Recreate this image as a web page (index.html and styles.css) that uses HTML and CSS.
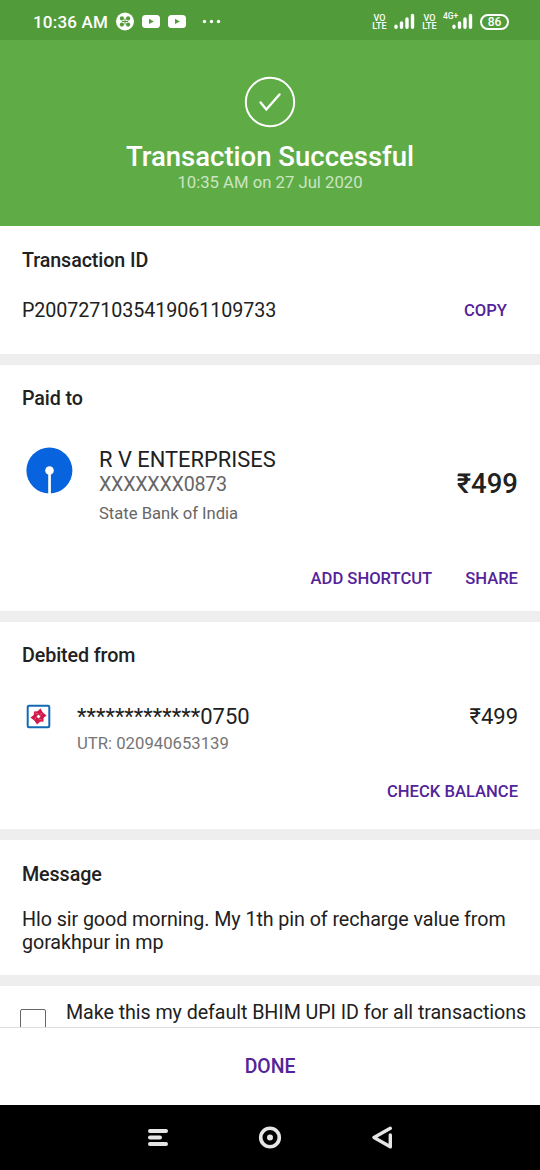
FILE: index.html
```html
<!DOCTYPE html>
<html lang="en">
<head>
<meta charset="utf-8">
<title>Transaction Successful</title>
<link rel="stylesheet" href="styles.css">
</head>
<body>
<div class="screen">
  <div class="status">
    <span class="clock">10:36 AM</span>
    <svg class="status-apps" width="108" height="20" viewBox="0 0 108 20">
      <circle cx="10" cy="9.500" r="9" fill="#fff"/>
      <g fill="#529b3a"><circle cx="6.900" cy="6.400" r="2.100"/><circle cx="13.100" cy="6.400" r="2.100"/><circle cx="6.900" cy="12.600" r="2.100"/><circle cx="13.100" cy="12.600" r="2.100"/></g><path d="M7 9.500h6M10 6.500v6" stroke="#529b3a" stroke-width="1"/>
      <rect x="27" y="3" width="18" height="13" rx="3.500" fill="#fff"/><path d="M34 6.800v5.200l4.800-2.600z" fill="#529b3a"/>
      <rect x="53" y="3" width="18" height="13" rx="3.500" fill="#fff"/><path d="M60 6.800v5.200l4.800-2.600z" fill="#529b3a"/>
      <g fill="#fff"><circle cx="89.500" cy="9.500" r="1.700"/><circle cx="96.500" cy="9.500" r="1.700"/><circle cx="103.500" cy="9.500" r="1.700"/></g>
    </svg>
    <span class="volte volte-first">VO<br>LTE</span>
    <svg class="signal" width="21" height="17" viewBox="0 0 21 17" stroke="#fff" stroke-width="3.400" stroke-linecap="round"><path d="M2 14.300v-1M7.500 14.300V10M13 14.300V6M18.500 14.300V2.500"/></svg>
    <span class="volte">VO<br>LTE</span>
    <span class="data-signal">
      <span class="net">4G+</span>
      <svg class="signal" width="21" height="17" viewBox="0 0 21 17" stroke="#fff" stroke-width="3.400" stroke-linecap="round"><path d="M2 14.300v-1M7.500 14.300V10M13 14.300V6M18.500 14.300V2.500"/></svg>
    </span>
    <span class="battery">86</span>
  </div>

  <header class="hero">
    <svg width="52" height="52" viewBox="0 0 52 52" fill="none" stroke="#fff"><circle cx="26" cy="26" r="24.200" stroke-width="2"/><path d="M16.600 26.500l5.700 7L35.500 18.500" stroke-width="2.400" stroke-linecap="round"/></svg>
    <h1 class="hero-title">Transaction Successful</h1>
    <p class="hero-date">10:35 AM on 27 Jul 2020</p>
  </header>

  <main class="content">
    <section class="card card-id">
      <h2 class="heading">Transaction ID</h2>
      <div class="row id-row"><span class="txn">P2007271035419061109733</span><a class="action copy">COPY</a></div>
    </section>

    <section class="card card-paid">
      <h2 class="heading">Paid to</h2>
      <div class="row payee">
        <svg class="sbi" width="48" height="48" viewBox="0 0 48 48"><circle cx="24.400" cy="23.500" r="23" fill="#0864de"/><circle cx="24.500" cy="23.500" r="4.300" fill="#fff"/><path d="M23.200 26h2.700v22h-2.700z" fill="#fff"/></svg>
        <div class="payee-info"><div class="payee-name">R V ENTERPRISES</div><div class="payee-account">XXXXXXX0873</div><div class="payee-bank">State Bank of India</div></div>
        <div class="amount-large">₹499</div>
      </div>
      <div class="actions"><a class="action shortcut">ADD SHORTCUT</a><a class="action share">SHARE</a></div>
    </section>

    <section class="card card-debit">
      <h2 class="heading">Debited from</h2>
      <div class="row debit">
        <svg class="bank" width="25" height="25" viewBox="0 0 25 25"><rect x="1.700" y="1.700" width="21.600" height="21.600" rx="1.200" fill="#fff" stroke="#136ab4" stroke-width="2"/><path fill="#d0184a" fill-rule="evenodd" d="M8 7.500L11.500 7.200L14.500 4.500L16.800 8.500L20.500 11.500L17.500 14L17.500 17.500L14 17.800L11 20.500L8.500 16.800L4.500 13.500L7.800 11ZM12.500 10.500L10.500 12.500L12.500 14.500L14.500 12.500Z"/><path d="M9 9l2.600.8M15.500 9l-.8 2.500M9 15.500l1-2M15.800 16l-2.600-.8" stroke="#f4a0b7" stroke-width=".5"/></svg>
        <div class="debit-info"><div class="debit-account">*************0750</div><div class="utr">UTR: 020940653139</div></div>
        <div class="amount">₹499</div>
      </div>
      <div class="actions"><a class="action balance">CHECK BALANCE</a></div>
    </section>

    <section class="card card-message">
      <h2 class="heading">Message</h2>
      <p class="message">Hlo sir good morning. My 1th pin of recharge value from gorakhpur in mp</p>
    </section>

    <section class="card card-default"><span class="checkbox"></span><span class="default-label">Make this my default BHIM UPI ID for all transactions</span></section>
  </main>

  <footer class="footer"><a class="done">DONE</a></footer>
  <nav class="navbar">
    <svg width="24" height="24" viewBox="0 0 24 24" stroke="#e6e6e6" stroke-width="4" stroke-linecap="round"><path d="M4 5h16M4 11.500h10M4 18h16"/></svg>
    <svg width="24" height="24" viewBox="0 0 24 24"><circle cx="12" cy="11.500" r="9.300" fill="none" stroke="#e6e6e6" stroke-width="3.600"/><circle cx="12" cy="11.500" r="3" fill="#e6e6e6"/></svg>
    <svg width="24" height="24" viewBox="0 0 24 24" fill="none" stroke="#e6e6e6" stroke-width="3.400" stroke-linecap="round" stroke-linejoin="round"><path d="M20.300 2.300L4 11.500L20.300 20.800V9"/></svg>
  </nav>
</div>
</body>
</html>
```

FILE: styles.css
```css
* { box-sizing: border-box; }
body { margin: 0; font-family: Roboto, sans-serif; color: #212121; background: #fff; }
h1, h2, p { margin: 0; }
.screen { width: 540px; height: 1170px; display: flex; flex-direction: column; overflow: hidden; white-space: nowrap; }
.status { height: 40px; flex: none; display: flex; align-items: center; background: #529b3a; color: #fff; padding: 3px 31px 0 33px; }
.clock { font-size: 17px; font-weight: 500; letter-spacing: .2px; width: 82px; }
.status-apps { flex: none; }
.volte { font-size: 9px; line-height: 8px; font-weight: 500; text-align: center; width: 15px; }
.volte-first { margin-left: auto; }
.signal { margin-left: 7px; flex: none; display: block; }
.signal + .volte { margin-left: 7px; }
.data-signal { position: relative; margin-left: 7px; padding-left: 8px; }
.data-signal .signal { margin-left: 0; }
.net { position: absolute; left: -1px; top: -1px; font-size: 8.500px; line-height: 9px; font-weight: 500; }
.battery { width: 29px; height: 16px; margin-left: 7px; border: 2px solid #fff; border-radius: 8px; font-size: 12px; line-height: 13px; font-weight: 500; text-align: center; }
.hero { height: 186px; flex: none; display: flex; flex-direction: column; align-items: center; padding-top: 36px; background: #5fac47; color: #fff; }
.hero-title { margin-top: 13px; font-size: 27.500px; line-height: 32px; font-weight: 500; }
.hero-date { font-size: 16.700px; line-height: 20px; color: #cbe5c3; }
.content { height: 801px; flex: none; overflow: hidden; background: #eee; display: flex; flex-direction: column; gap: 11px; }
.card { background: #fff; flex: none; padding: 0 22px; }
.card-id { height: 128px; padding-top: 22px; }
.card-paid { height: 246px; padding-top: 21px; }
.card-debit { height: 207px; padding-top: 21px; }
.card-message { height: 135px; padding-top: 22px; }
.card-default { height: 80px; padding-top: 14px; display: flex; }
.heading { font-size: 19.700px; line-height: 26px; font-weight: 500; letter-spacing: -.1px; }
.row { display: flex; }
.id-row { justify-content: space-between; align-items: center; height: 26px; margin-top: 23px; }
.txn { font-size: 19.700px; letter-spacing: -.07px; }
.action { color: #53239a; font-size: 16.600px; line-height: 20px; font-weight: 500; }
.copy { margin-right: 11px; padding-top: 1px; }
.payee { margin-top: 35px; height: 84px; }
.sbi { margin: 0 0 0 3px; flex: none; }
.payee-info { margin-left: 26px; flex: 1; color: #666; }
.payee-name { font-size: 21.900px; line-height: 25px; color: #212121; }
.payee-account { font-size: 19.700px; line-height: 24px; letter-spacing: -.25px; margin-top: 1px; }
.payee-bank { font-size: 16.600px; line-height: 20px; margin-top: 7px; }
.amount-large { font-size: 27.500px; line-height: 32px; font-weight: 500; margin-top: 21px; }
.actions { display: flex; justify-content: flex-end; gap: 33px; }
.card-paid .actions { margin-top: 38px; }
.debit { margin-top: 35px; height: 50px; }
.bank { margin: 0 0 0 4px; flex: none; }
.debit-info { margin-left: 26px; flex: 1; }
.debit-account, .amount { font-size: 22px; line-height: 26px; }
.utr { font-size: 16.700px; line-height: 20px; color: #757575; margin-top: 4px; }
.card-debit .actions { margin-top: 28px; }
.message { font-size: 19.700px; line-height: 23px; margin-top: 20px; letter-spacing: -.07px; white-space: normal; }
.checkbox { width: 26px; height: 26px; margin: 9px 20px 0 -2px; border: 1.500px solid #666; border-radius: 2px; flex: none; }
.default-label { font-size: 19.700px; line-height: 26px; letter-spacing: -.07px; }
.footer { height: 78px; flex: none; border-top: 1px solid #ddd; background: #fff; display: flex; justify-content: center; align-items: center; }
.done { color: #53239a; font-size: 19.400px; font-weight: 500; }
.navbar { height: 65px; flex: none; display: flex; justify-content: space-between; align-items: center; background: #000; padding: 0 146px; }
```
